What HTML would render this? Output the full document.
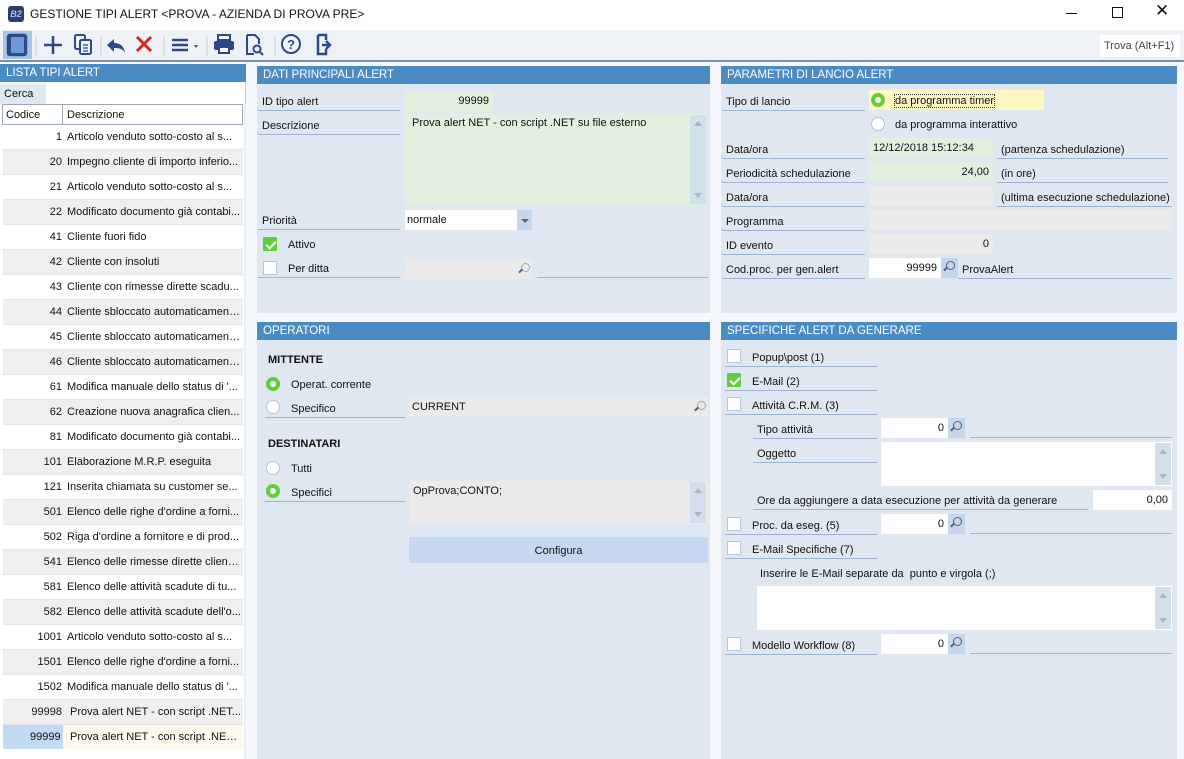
<!DOCTYPE html>
<html><head><meta charset="utf-8">
<style>
*{margin:0;padding:0;box-sizing:border-box}
body{width:1184px;height:759px;overflow:hidden;background:#f4f7fb;font-family:"Liberation Sans",sans-serif;font-size:11px;color:#111;position:relative}
.a{position:absolute;white-space:nowrap}
.hd{position:absolute;background:#4a8bc3;color:#fff;font-size:11.5px;padding:3px 0 0 6px;height:18px;white-space:nowrap}
.pn{position:absolute;background:#dfe7f1}
.L{position:absolute;border-bottom:1px solid #9fb4cf;height:20px;padding:5px 0 0 4px;white-space:nowrap}
.f{position:absolute;height:20px;padding:4px 4px;white-space:nowrap}
.g{background:#e2f1df}.w{background:#fff}.y{background:#ebebeb}
.r{text-align:right}
.cb{position:absolute;width:14px;height:14px;background:#fff;border:1px solid #b9c4d2}
.cb.on{background:#5fcf3c;border-color:#5fcf3c}
.cb.on:after{content:"";position:absolute;left:4px;top:1px;width:4px;height:8px;border:solid #fff;border-width:0 2px 2px 0;transform:rotate(45deg)}
.rd{position:absolute;width:14px;height:14px;border-radius:50%;background:#fff;border:1px solid #b9c4d2}
.rd.on{border:4px solid #5fcf3c;background:#fff}
.sb{position:absolute;width:16px;background:#d3deeb}
.sb:before{content:"";position:absolute;left:4px;top:6px;border:4px solid transparent;border-bottom:5px solid #a9b6c6;border-top:0}
.sb:after{content:"";position:absolute;left:4px;bottom:6px;border:4px solid transparent;border-top:5px solid #a9b6c6;border-bottom:0}
.sr{position:absolute;width:17px;height:20px;background:#c6d6ea}
.mg{position:absolute;width:9px;height:9px;border:1.5px solid #4b5f86;border-radius:50%}
.mg:after{content:"";position:absolute;left:-4px;top:6px;width:5px;height:1.5px;background:#4b5f86;transform:rotate(-45deg)}
.row{position:absolute;left:3px;width:240px;height:25px;border-bottom:1px solid #e4e4e4}
.row span{position:absolute;top:6px;white-space:nowrap;overflow:hidden}
.row .c{right:181px;text-align:right}
.row .d{left:64px;width:174px;text-overflow:ellipsis}
.b{font-weight:bold}
</style></head><body>
<div class="a" style="left:0;top:0;width:1184px;height:30px;background:#fff"></div>
<div class="a" style="left:8px;top:6px;width:16px;height:16px;background:#2c3e6b;border-radius:3px;color:#9fc0ff;font-size:9px;font-style:italic;font-weight:bold;text-align:center;line-height:16px">B2</div>
<div class="a" style="left:30px;top:7px;font-size:12px">GESTIONE TIPI ALERT &lt;PROVA - AZIENDA DI PROVA PRE&gt;</div>
<div class="a" style="left:1066px;top:13px;width:11px;height:1px;background:#111"></div>
<div class="a" style="left:1112px;top:7px;width:11px;height:11px;border:1px solid #111"></div>
<div class="a" style="left:1155px;top:1px;font-size:17px">✕</div>
<div class="a" style="left:0;top:30px;width:1184px;height:30px;background:#eef2f7"></div>
<div class="a" style="left:0;top:60px;width:1184px;height:2px;background:#7c8fa8"></div>
<div class="a" style="left:3px;top:31px;width:29px;height:28px;background:#a8c4e4"></div>
<svg class="a" style="left:0;top:30px" width="340" height="30" viewBox="0 0 340 30">
<g fill="none" stroke="#2b4a8a" stroke-width="2.5">
<rect x="8" y="5" width="18" height="20" rx="2" fill="#2b4a8a"/>
<rect x="11" y="7" width="13" height="16" fill="#6a9bd3" stroke="none"/>
<path d="M53 6v18M44 15h18"/>
<rect x="75" y="5" width="10" height="14" rx="1.5" stroke-width="2"/>
<rect x="80" y="10" width="11" height="14" rx="1.5" fill="#eef2f7" stroke-width="2"/>
<path d="M83 15h5M83 18h5M83 21h5" stroke-width="1.3"/>
<path d="M107 15l7-6v4c6 0 10 3 11 10c-2-4-5-5-11-5v4z" fill="#2b4a8a" stroke="none"/>
<path d="M137 7l14 14M151 7l-14 14" stroke="#d9261c" stroke-width="3"/>
<path d="M172 10h16M172 15h16M172 20h16"/>
<path d="M194 15l4 0l-2 3z" fill="#2b4a8a" stroke="none"/>
<rect x="214" y="11" width="20" height="9" rx="2" fill="#2b4a8a" stroke="none"/>
<rect x="218" y="5" width="12" height="5" stroke-width="2"/>
<rect x="219" y="17" width="10" height="6" fill="#fff" stroke-width="2"/>
<path d="M247 5h8l4 4v5M247 5v19h7" stroke-width="2"/>
<circle cx="257" cy="19" r="3.5" stroke-width="2"/><path d="M260 22l3 3" stroke-width="2"/>
<circle cx="291" cy="14" r="9" stroke-width="2"/>
<text x="287" y="19" font-size="13" font-weight="bold" fill="#2b4a8a" stroke="none" font-family="Liberation Sans">?</text>
<path d="M318 5h8v5M318 5v19h8v-5" stroke-width="2.5"/>
<path d="M322 15h7M326 11l4 4-4 4" stroke-width="2.5"/>
</g>
<g stroke="#c5cfdb"><path d="M36 6v20M101 6v20M164 6v20M207 6v20M275 6v20"/></g>
</svg>
<div class="a" style="left:1100px;top:35px;width:80px;height:22px;background:#fff;color:#444;font-size:11px;padding:5px 0 0 4px">Trova (Alt+F1)</div>
<div class="a" style="left:0;top:63px;width:246px;height:696px;background:#fff;border-right:1px solid #c5cfdb"></div>
<div class="hd" style="left:0;top:64px;width:246px">LISTA TIPI ALERT</div>
<div class="a" style="left:0;top:84px;width:46px;height:20px;background:#dfe7f1;padding:4px 0 0 4px">Cerca</div>
<div class="a" style="left:2px;top:104px;width:241px;height:21px;border:1px solid #9aa6b5;background:#fff"></div>
<div class="a" style="left:62px;top:104px;width:1px;height:21px;background:#9aa6b5"></div>
<div class="a" style="left:6px;top:109px">Codice</div>
<div class="a" style="left:67px;top:109px">Descrizione</div>
<div class="a" style="left:244px;top:104px;width:2px;height:655px;background:#e8eef5"></div>

<div class="row" style="top:125px;background:#fff"><span class="c">1</span><span class="d">Articolo venduto sotto-costo al s...</span></div>
<div class="row" style="top:150px;background:#efefef"><span class="c">20</span><span class="d">Impegno cliente di importo inferio...</span></div>
<div class="row" style="top:175px;background:#fff"><span class="c">21</span><span class="d">Articolo venduto sotto-costo al s...</span></div>
<div class="row" style="top:200px;background:#efefef"><span class="c">22</span><span class="d">Modificato documento già contabi...</span></div>
<div class="row" style="top:225px;background:#fff"><span class="c">41</span><span class="d">Cliente fuori fido</span></div>
<div class="row" style="top:250px;background:#efefef"><span class="c">42</span><span class="d">Cliente con insoluti</span></div>
<div class="row" style="top:275px;background:#fff"><span class="c">43</span><span class="d">Cliente con rimesse dirette scadu...</span></div>
<div class="row" style="top:300px;background:#efefef"><span class="c">44</span><span class="d">Cliente sbloccato automaticament...</span></div>
<div class="row" style="top:325px;background:#fff"><span class="c">45</span><span class="d">Cliente sbloccato automaticament...</span></div>
<div class="row" style="top:350px;background:#efefef"><span class="c">46</span><span class="d">Cliente sbloccato automaticament...</span></div>
<div class="row" style="top:375px;background:#fff"><span class="c">61</span><span class="d">Modifica manuale dello status di '...</span></div>
<div class="row" style="top:400px;background:#efefef"><span class="c">62</span><span class="d">Creazione nuova anagrafica clien...</span></div>
<div class="row" style="top:425px;background:#fff"><span class="c">81</span><span class="d">Modificato documento già contabi...</span></div>
<div class="row" style="top:450px;background:#efefef"><span class="c">101</span><span class="d">Elaborazione M.R.P. eseguita</span></div>
<div class="row" style="top:475px;background:#fff"><span class="c">121</span><span class="d">Inserita chiamata su customer se...</span></div>
<div class="row" style="top:500px;background:#efefef"><span class="c">501</span><span class="d">Elenco delle righe d'ordine a forni...</span></div>
<div class="row" style="top:525px;background:#fff"><span class="c">502</span><span class="d">Riga d'ordine a fornitore e di prod...</span></div>
<div class="row" style="top:550px;background:#efefef"><span class="c">541</span><span class="d">Elenco delle rimesse dirette clienti...</span></div>
<div class="row" style="top:575px;background:#fff"><span class="c">581</span><span class="d">Elenco delle attività scadute di tu...</span></div>
<div class="row" style="top:600px;background:#efefef"><span class="c">582</span><span class="d">Elenco delle attività scadute dell'o...</span></div>
<div class="row" style="top:625px;background:#fff"><span class="c">1001</span><span class="d">Articolo venduto sotto-costo al s...</span></div>
<div class="row" style="top:650px;background:#efefef"><span class="c">1501</span><span class="d">Elenco delle righe d'ordine a forni...</span></div>
<div class="row" style="top:675px;background:#fff"><span class="c">1502</span><span class="d">Modifica manuale dello status di '...</span></div>
<div class="row" style="top:700px;background:#efefef"><span class="c">99998</span><span class="d" style="left:67px;width:172px">Prova alert NET - con script .NET...</span></div>
<div class="a" style="left:3px;top:725px;width:60px;height:24px;background:#c2d9f2"></div>
<div class="a" style="left:63px;top:725px;width:180px;height:24px;background:#fdf8ec"></div>
<div class="a" style="left:30px;top:731px">99999</div>
<div class="a" style="left:70px;top:731px;width:170px;overflow:hidden;text-overflow:ellipsis">Prova alert NET - con script .NET...</div>

<div class="pn" style="left:257px;top:66px;width:453px;height:247px"></div>
<div class="hd" style="left:257px;top:66px;width:453px">DATI PRINCIPALI ALERT</div>
<div class="L" style="left:258px;top:91px;width:142px">ID tipo alert</div>
<div class="f g r" style="left:405px;top:91px;width:88px">99999</div>
<div class="L" style="left:258px;top:115px;width:142px">Descrizione</div>
<div class="f g" style="left:405px;top:114px;width:301px;height:91px;padding:3px 7px">Prova alert NET - con script .NET su file esterno</div>
<div class="sb" style="left:690px;top:115px;height:89px"></div>
<div class="L" style="left:258px;top:210px;width:142px">Priorità</div>
<div class="f w" style="left:405px;top:210px;width:112px;padding-left:2px">normale</div>
<div class="a" style="left:517px;top:210px;width:15px;height:20px;background:#c6d6ea"></div>
<div class="a" style="left:521px;top:219px;border:4px solid transparent;border-top:4px solid #55667f;border-bottom:0"></div>
<div class="cb on" style="left:263px;top:237px"></div>
<div class="a" style="left:288px;top:239px">Attivo</div>
<div class="L" style="left:258px;top:258px;width:142px;padding-left:30px">Per ditta</div>
<div class="cb" style="left:263px;top:261px"></div>
<div class="f y" style="left:405px;top:259px;width:127px"></div>
<div class="mg" style="left:521px;top:263px;border-color:#9aa;"></div>
<div class="a" style="left:537px;top:277px;width:171px;height:1px;background:#9fb4cf"></div>

<div class="pn" style="left:721px;top:66px;width:456px;height:247px"></div>
<div class="hd" style="left:721px;top:66px;width:456px">PARAMETRI DI LANCIO ALERT</div>
<div class="L" style="left:722px;top:91px;width:143px">Tipo di lancio</div>
<div class="f" style="left:869px;top:90px;width:175px;height:20px;background:#fff8c0"></div>
<div class="rd on" style="left:871px;top:93px"></div>
<div class="a" style="left:895px;top:95px;outline:1px dotted #333">da programma timer</div>
<div class="rd" style="left:871px;top:117px"></div>
<div class="a" style="left:895px;top:119px">da programma interattivo</div>
<div class="L" style="left:722px;top:139px;width:143px">Data/ora</div>
<div class="f g" style="left:869px;top:138px;width:124px">12/12/2018 15:12:34</div>
<div class="L" style="left:997px;top:139px;width:171px">(partenza schedulazione)</div>
<div class="L" style="left:722px;top:163px;width:143px">Periodicità schedulazione</div>
<div class="f g r" style="left:869px;top:162px;width:124px">24,00</div>
<div class="L" style="left:997px;top:163px;width:171px">(in ore)</div>
<div class="L" style="left:722px;top:187px;width:143px">Data/ora</div>
<div class="f y" style="left:869px;top:186px;width:124px"></div>
<div class="L" style="left:997px;top:187px;width:175px">(ultima esecuzione schedulazione)</div>
<div class="L" style="left:722px;top:211px;width:143px">Programma</div>
<div class="f y" style="left:869px;top:210px;width:303px"></div>
<div class="L" style="left:722px;top:235px;width:143px">ID evento</div>
<div class="f y r" style="left:869px;top:234px;width:124px">0</div>
<div class="L" style="left:722px;top:259px;width:143px">Cod.proc. per gen.alert</div>
<div class="f w r" style="left:869px;top:258px;width:72px">99999</div>
<div class="sr" style="left:941px;top:258px"></div><div class="mg" style="left:946px;top:261px"></div>
<div class="L" style="left:958px;top:259px;width:214px">ProvaAlert</div>

<div class="pn" style="left:257px;top:322px;width:453px;height:437px"></div>
<div class="hd" style="left:257px;top:322px;width:453px">OPERATORI</div>
<div class="a b" style="left:268px;top:354px">MITTENTE</div>
<div class="rd on" style="left:266px;top:377px"></div>
<div class="a" style="left:291px;top:379px">Operat. corrente</div>
<div class="L" style="left:265px;top:398px;width:140px;padding-left:26px">Specifico</div>
<div class="rd" style="left:266px;top:400px"></div>
<div class="f y" style="left:409px;top:397px;width:299px;padding-left:3px">CURRENT</div>
<div class="mg" style="left:697px;top:401px;border-color:#9aa"></div>
<div class="a b" style="left:268px;top:438px">DESTINATARI</div>
<div class="rd" style="left:266px;top:461px"></div>
<div class="a" style="left:291px;top:463px">Tutti</div>
<div class="L" style="left:265px;top:482px;width:140px;padding-left:26px">Specifici</div>
<div class="rd on" style="left:266px;top:484px"></div>
<div class="f y" style="left:409px;top:481px;width:299px;height:43px;padding-left:4px">OpProva;CONTO;</div>
<div class="sb" style="left:690px;top:482px;height:41px"></div>
<div class="a" style="left:409px;top:537px;width:299px;height:26px;background:#c6d8ef;text-align:center;padding-top:8px">Configura</div>

<div class="pn" style="left:721px;top:322px;width:456px;height:437px"></div>
<div class="hd" style="left:721px;top:322px;width:456px">SPECIFICHE ALERT DA GENERARE</div>
<div class="L" style="left:725px;top:347px;width:152px;padding-left:27px">Popup\post (1)</div><div class="cb" style="left:727px;top:349px"></div>
<div class="L" style="left:725px;top:371px;width:152px;padding-left:27px">E-Mail (2)</div><div class="cb on" style="left:727px;top:373px"></div>
<div class="L" style="left:725px;top:395px;width:152px;padding-left:27px">Attività C.R.M. (3)</div><div class="cb" style="left:727px;top:397px"></div>
<div class="L" style="left:753px;top:419px;width:124px">Tipo attività</div>
<div class="f w r" style="left:881px;top:418px;width:67px">0</div>
<div class="sr" style="left:948px;top:418px"></div><div class="mg" style="left:953px;top:421px"></div>
<div class="a" style="left:970px;top:437px;width:202px;height:1px;background:#9fb4cf"></div>
<div class="L" style="left:753px;top:443px;width:124px">Oggetto</div>
<div class="f w" style="left:881px;top:442px;width:291px;height:44px"></div>
<div class="sb" style="left:1155px;top:443px;height:42px"></div>
<div class="L" style="left:753px;top:490px;width:335px">Ore da aggiungere a data esecuzione per attività da generare</div>
<div class="f w r" style="left:1093px;top:490px;width:79px">0,00</div>
<div class="L" style="left:725px;top:515px;width:152px;padding-left:27px">Proc. da eseg. (5)</div><div class="cb" style="left:727px;top:517px"></div>
<div class="f w r" style="left:881px;top:514px;width:67px">0</div>
<div class="sr" style="left:948px;top:514px"></div><div class="mg" style="left:953px;top:517px"></div>
<div class="a" style="left:970px;top:533px;width:202px;height:1px;background:#9fb4cf"></div>
<div class="L" style="left:725px;top:539px;width:152px;padding-left:27px">E-Mail Specifiche (7)</div><div class="cb" style="left:727px;top:541px"></div>
<div class="a" style="left:760px;top:568px">Inserire le E-Mail separate da&nbsp; punto e virgola (;)</div>
<div class="f w" style="left:757px;top:586px;width:415px;height:44px"></div>
<div class="sb" style="left:1155px;top:587px;height:42px"></div>
<div class="L" style="left:725px;top:635px;width:152px;padding-left:27px">Modello Workflow (8)</div><div class="cb" style="left:727px;top:637px"></div>
<div class="f w r" style="left:881px;top:634px;width:67px">0</div>
<div class="sr" style="left:948px;top:634px"></div><div class="mg" style="left:953px;top:637px"></div>
<div class="a" style="left:970px;top:653px;width:202px;height:1px;background:#9fb4cf"></div>
</body></html>
